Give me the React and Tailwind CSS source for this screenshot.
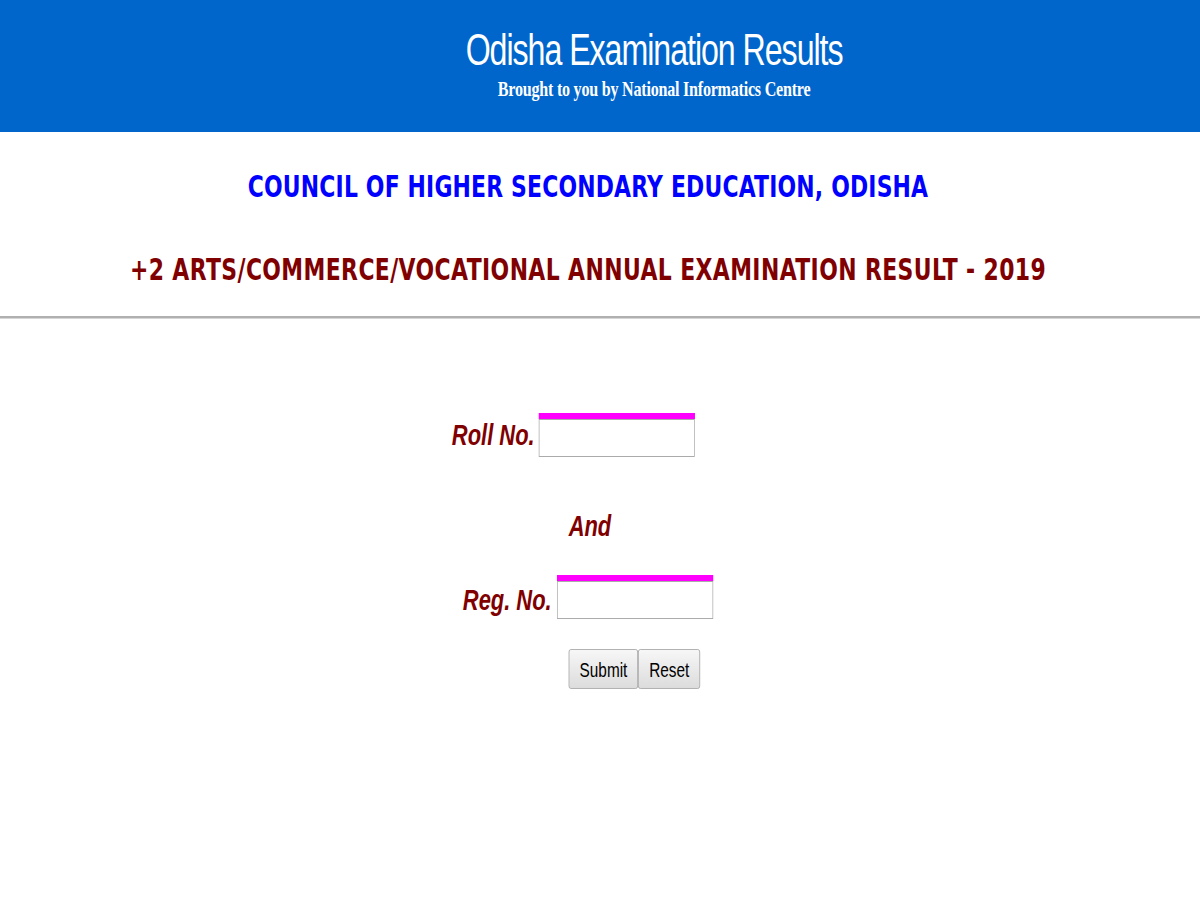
import React from 'react';

// The page is laid out at its natural width and squeezed horizontally,
// as the reference shot is.
function Field({ label, labelClass }) {
    return (
        <div className="flex items-center">
            <label className={`font-['Liberation_Sans',Arial,sans-serif] text-[30px] leading-none font-bold italic text-[#800000] ${labelClass}`}>
                {label}
            </label>
            <div className="border-t-[6px] border-t-[#ff00ff]">
                <input
                    type="text"
                    className="block w-[214px] h-[38px] border border-[#ababab] bg-white outline-none"
                />
            </div>
        </div>
    );
}

function Button({ children }) {
    return (
        <button
            type="button"
            className="h-[40px] px-[14px] border border-[#a6a6a6] rounded-[3px] bg-gradient-to-b from-[#f7f7f7] to-[#dcdcdc] font-['Liberation_Sans',Arial,sans-serif] text-[21px] leading-none text-black"
        >
            {children}
        </button>
    );
}

export default function App() {
    return (
        <div className="w-full h-[900px] overflow-hidden bg-white">
            <div className="w-[1644px] origin-top-left scale-x-[0.73]">
                <header className="h-[132px] bg-[#0066cc] pt-[28px] pl-[148px] flex flex-col items-center text-white">
                    <h1 className="font-['Liberation_Sans',Arial,sans-serif] text-[44px] leading-none font-normal tracking-[-1.4px]">
                        Odisha Examination Results
                    </h1>
                    <p className="mt-[6px] font-['Liberation_Serif','Times_New_Roman',serif] text-[22px] leading-none font-bold tracking-[-0.3px]">
                        Brought to you by National Informatics Centre
                    </p>
                </header>

                <div className="pt-[40px] pr-[33px] flex flex-col items-center font-['DejaVu_Sans',Verdana,sans-serif] font-bold">
                    <h2 className="text-[30px] leading-none text-[#0000ff] tracking-[0.25px]">
                        COUNCIL OF HIGHER SECONDARY EDUCATION, ODISHA
                    </h2>
                    <h3 className="mt-[53px] text-[30px] leading-none text-[#800000] tracking-[0.55px]">
                        +2 ARTS/COMMERCE/VOCATIONAL ANNUAL EXAMINATION RESULT - 2019
                    </h3>
                </div>

                <div className="mt-[31px] border-t-2 border-t-[#b0b0b0] border-b border-b-[#d6d6d6]" />

                <form className="flex flex-col">
                    <div className="mt-[94px] pl-[619px]">
                        <Field label="Roll No." labelClass="mr-[6px]" />
                    </div>
                    <div className="mt-[54px] pl-[779px] font-['Liberation_Sans',Arial,sans-serif] text-[30px] leading-none font-bold italic text-[#800000]">
                        And
                    </div>
                    <div className="mt-[34px] pl-[634px]">
                        <Field label="Reg. No." labelClass="mr-[7px] pt-[5px]" />
                    </div>
                    <div className="mt-[30px] pl-[779px] flex">
                        <Button>Submit</Button>
                        <Button>Reset</Button>
                    </div>
                </form>
            </div>
        </div>
    );
}
